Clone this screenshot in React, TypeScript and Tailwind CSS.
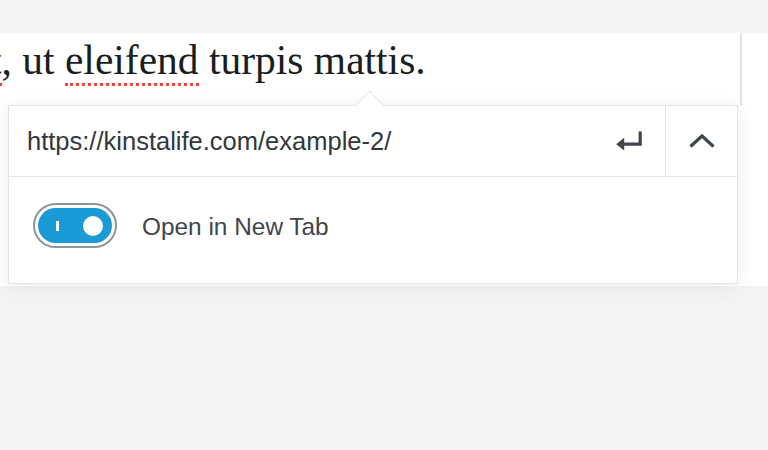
import { useState } from 'react';

// ── Icons ─────────────────────────────────────────────────────────────────

function ReturnIcon() {
    return (
        <svg width="32" height="32" viewBox="0 0 20 20" fill="#40464d" aria-hidden>
            <path d="M16 4h2v9H7v3l-5-4 5-4v3h9V4z" />
        </svg>
    );
}

function ChevronUpIcon() {
    return (
        <svg width="28" height="16" viewBox="0 0 28 16" fill="none" aria-hidden>
            <path d="M2.5 13.5 14 3l11.5 10.5" stroke="#40464d" strokeWidth="3.2" />
        </svg>
    );
}

// ── Main Component ──────────────────────────────────────────────────────────

export default function App() {
    const [newTab, setNewTab] = useState(true);
    const url = 'https://kinstalife.com/example-2/';

    return (
        <div className="h-[450px] w-[768px] overflow-hidden bg-[#f4f4f4]">
            <div className="h-[33px]" />

            {/* ── Editor canvas ──────────────────────────────────────────── */}
            <div className="bg-white pb-[2px]">
                {/* paragraph block */}
                <div className="h-[72px] w-[742px] overflow-hidden whitespace-nowrap border-r-2 border-[#e0e2e5] font-['Liberation_Serif',serif] text-[41.5px] leading-[55px] text-[#191e23]">
                    <span className="-ml-[10px] inline-block">
                        <span className="border-b-[3px] border-dotted border-[#f0443a]">t</span>, ut{' '}
                        <span className="border-b-[3px] border-dotted border-[#f0443a]">eleifend</span> turpis mattis.
                    </span>
                </div>

                {/* ── Link popover ───────────────────────────────────────── */}
                <div className="relative ml-[8px] w-[730px] border border-[#e2e4e7] bg-white shadow-[0_3px_20px_rgba(25,30,35,0.07)]">
                    <div className="absolute -top-[11px] left-[350px] h-[21px] w-[21px] rotate-45 border-l border-t border-[#e2e4e7] bg-white" />

                    <div className="relative flex h-[71px] border-b border-[#e2e4e7] font-['Liberation_Sans',Arial,sans-serif]">
                        <div className="flex flex-1 items-center pl-[18px] pr-[20px]">
                            <span className="flex-1 text-[25.5px] text-[#32373c]">{url}</span>
                            <ReturnIcon />
                        </div>
                        <div className="flex w-[72px] items-center justify-center border-l border-[#e2e4e7]">
                            <ChevronUpIcon />
                        </div>
                    </div>

                    <div className="flex h-[106px] items-center pb-[9px] pl-[24px] font-['Liberation_Sans',Arial,sans-serif]">
                        <button
                            type="button"
                            onClick={() => setNewTab(!newTab)}
                            className="h-[45px] w-[84px] rounded-full border-2 border-[#8d959d] p-[3px]"
                        >
                            <span className="flex h-full w-full items-center rounded-full bg-[#1a9bd5] pl-[18px] pr-[9px]">
                                <span className="h-[10px] w-[3px] bg-white" />
                                <span className="ml-auto h-[20px] w-[20px] rounded-full bg-white" />
                            </span>
                        </button>
                        <span className="ml-[25px] pt-[4px] text-[24.4px] text-[#40464d]">Open in New Tab</span>
                    </div>
                </div>
            </div>
        </div>
    );
}
